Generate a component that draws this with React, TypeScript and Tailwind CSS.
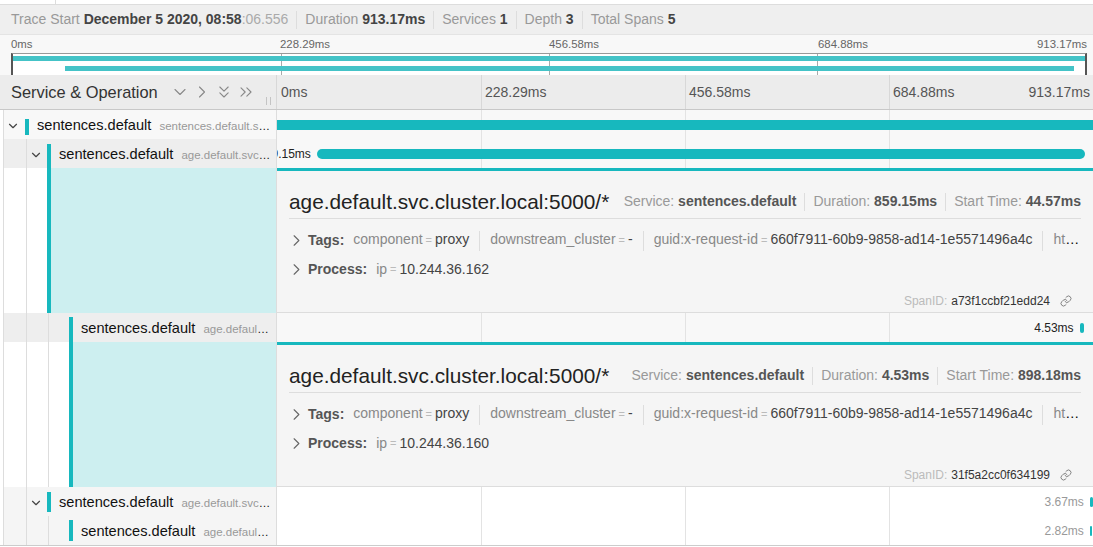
import { ChevronDown, ChevronRight, ChevronsDown, ChevronsRight, Link } from 'lucide-react';

const TOTAL = 913.17;

type Detail = {
  service: string;
  duration: string;
  start: string;
  ip: string;
  spanId: string;
};

type Span = {
  depth: number;
  op: string;
  start: number;
  duration: number;
  label?: string;
  labelClass?: string;
  hasChildren?: boolean;
  nameBg: string;
  viewBg: string;
  markerClass: string;
  barClass: string;
  detail?: Detail;
};

const OP = 'age.default.svc.cluster.local:5000/*';

const spans: Span[] = [
  {
    depth: 0,
    op: 'sentences.default.svc.cluster.local:5000/*',
    start: 0,
    duration: TOTAL,
    hasChildren: true,
    nameBg: 'bg-[#f8f8f8]',
    viewBg: 'bg-[#f8f8f8]',
    markerClass: 'mt-[9px] mb-[4px]',
    barClass: 'rounded-none',
  },
  {
    depth: 1,
    op: OP,
    start: 44.57,
    duration: 859.15,
    label: '859.15ms',
    labelClass: 'text-[#222]',
    hasChildren: true,
    nameBg: 'bg-[#eeeeee]',
    viewBg: 'bg-[#f8f8f8]',
    markerClass: 'mt-[5px]',
    barClass: 'rounded-[5px]',
    detail: {
      service: 'sentences.default',
      duration: '859.15ms',
      start: '44.57ms',
      ip: '10.244.36.162',
      spanId: 'a73f1ccbf21edd24',
    },
  },
  {
    depth: 2,
    op: OP,
    start: 898.18,
    duration: 4.53,
    label: '4.53ms',
    labelClass: 'text-[#222]',
    nameBg: 'bg-[#eeeeee]',
    viewBg: 'bg-[#f8f8f8]',
    markerClass: 'mt-[4px]',
    barClass: 'rounded-[3px]',
    detail: {
      service: 'sentences.default',
      duration: '4.53ms',
      start: '898.18ms',
      ip: '10.244.36.160',
      spanId: '31f5a2cc0f634199',
    },
  },
  {
    depth: 1,
    op: OP,
    start: 909.6,
    duration: 3.67,
    label: '3.67ms',
    labelClass: 'text-[#999]',
    hasChildren: true,
    nameBg: 'bg-[#f5f5f5]',
    viewBg: 'bg-white',
    markerClass: 'mt-[5px] mb-[4px]',
    barClass: 'rounded-[2px]',
  },
  {
    depth: 2,
    op: OP,
    start: 909.6,
    duration: 2.82,
    label: '2.82ms',
    labelClass: 'text-[#999]',
    nameBg: 'bg-[#f5f5f5]',
    viewBg: 'bg-white',
    markerClass: 'my-[4px]',
    barClass: 'rounded-[2px]',
  },
];

const tags: [string, string][] = [
  ['component', 'proxy'],
  ['downstream_cluster', '-'],
  ['guid:x-request-id', '660f7911-60b9-9858-ad14-1e5571496a4c'],
  ['http.method', 'GET'],
];

function Sep() {
  return <span className="mx-2 inline-block h-[18px] w-px bg-[#dddddd] align-middle" />;
}

function Guides({ depth }: { depth: number }) {
  return (
    <>
      {Array.from({ length: depth }).map((_, i) => (
        <div
          key={i}
          className={`${i === 0 ? 'w-[23px]' : 'w-[22px]'} shrink-0 border-r border-[#dddddd]`}
        />
      ))}
    </>
  );
}

function Ticks({ line }: { line: string }) {
  return (
    <div className="grid h-full grid-cols-4">
      <div />
      <div className={`border-l ${line}`} />
      <div className={`border-l ${line}`} />
      <div className={`border-l ${line}`} />
    </div>
  );
}

function SpanRow({ span }: { span: Span }) {
  const left = (span.start / TOTAL) * 100;
  const width = (span.duration / TOTAL) * 100;
  return (
    <div className="flex h-[29px]">
      <div className="flex w-[277px] shrink-0 border-r border-[#dddddd]">
        <div className="w-[4px] shrink-0 border-r border-[#dddddd] bg-white" />
        <div className={`flex min-w-0 flex-1 ${span.nameBg}`}>
          <Guides depth={span.depth} />
          <div className={`${span.depth === 0 ? 'w-[21px]' : 'w-[20px]'} flex shrink-0 items-center pt-[3px]`}>
            {span.hasChildren && (
              <ChevronDown size={14} strokeWidth={2} className="ml-[2px] text-[#444]" />
            )}
          </div>
          <div className={`w-[4px] shrink-0 bg-[#17b8be] ${span.markerClass}`} />
          <div className="min-w-0 flex-1 self-center truncate pl-[8px] pr-[5px] pt-[3px] text-[11.5px] text-[#111]">
            <span className="text-[14.6px]">sentences.default</span>
            <span className="ml-[8px] text-[#999]">{span.op}</span>
          </div>
        </div>
      </div>
      <div className={`relative min-w-0 flex-1 overflow-hidden ${span.viewBg}`}>
        <Ticks line="border-[#e3e3e3]" />
        <div
          className={`absolute top-1/2 h-[10px] -translate-y-1/2 bg-[#17b8be] ${span.barClass}`}
          style={{ left: `${left}%`, width: `${width}%` }}
        />
        {span.label && (
          <span
            className={`absolute top-1/2 -translate-y-1/2 whitespace-nowrap text-[12px] ${span.labelClass}`}
            style={{ right: `calc(${100 - left}% + 6px)` }}
          >
            {span.label}
          </span>
        )}
      </div>
    </div>
  );
}

function DetailRow({ depth, d }: { depth: number; d: Detail }) {
  return (
    <div className="flex h-[145px]">
      <div className="flex w-[277px] shrink-0 border-r border-[#dddddd]">
        <div className="w-[4px] shrink-0 border-r border-[#dddddd] bg-white" />
        <Guides depth={depth} />
        <div className={`${depth === 0 ? 'w-[21px]' : 'w-[20px]'} shrink-0 bg-white`} />
        <div className="w-[4px] shrink-0 bg-[#17b8be]" />
        <div className="flex-1 bg-[#cdeff0]" />
      </div>
      <div className="flex min-w-0 flex-1 flex-col border-t-[3px] border-b border-t-[#17b8be] border-b-[#dddddd] bg-[#f5f5f5] px-[12px]">
        <div className="flex items-center justify-between border-b border-[#dddddd] pt-[18px] pb-[4px]">
          <span className="text-[20.8px] leading-[25px] text-[#222]">{OP}</span>
          <div className="flex items-center whitespace-nowrap text-[14px] text-[#999]">
            <span>
              Service: <b className="text-[#555]">{d.service}</b>
            </span>
            <Sep />
            <span>
              Duration: <b className="text-[#555]">{d.duration}</b>
            </span>
            <Sep />
            <span>
              Start Time: <b className="text-[#555]">{d.start}</b>
            </span>
          </div>
        </div>
        <div className="mt-[10px] flex h-[22px] items-center text-[14px]">
          <ChevronRight size={19} strokeWidth={1.4} className="-ml-[2px] shrink-0 text-[#666]" />
          <b className="ml-[2px] shrink-0 text-[#555]">Tags:</b>
          <div className="ml-[9px] min-w-0 flex-1 truncate">
            {tags.map(([k, v], i) => (
              <span key={k}>
                {i > 0 && <span className="mx-[10px] inline-block h-[20px] w-px bg-[#dddddd] align-middle" />}
                <span className="text-[#888]">{k}</span>
                <span className="mx-[3px] text-[11px] text-[#bbb]">=</span>
                <span className="text-[#444]">{v}</span>
              </span>
            ))}
          </div>
        </div>
        <div className="mt-[7px] flex h-[22px] items-center text-[14px]">
          <ChevronRight size={19} strokeWidth={1.4} className="-ml-[2px] shrink-0 text-[#666]" />
          <b className="ml-[2px] text-[#555]">Process:</b>
          <span className="ml-[9px] text-[#888]">ip</span>
          <span className="mx-[3px] text-[11px] text-[#bbb]">=</span>
          <span className="text-[#444]">{d.ip}</span>
        </div>
        <div className="mt-[13px] flex items-center justify-end pr-[9px] text-[12px] leading-[16px]">
          <span className="text-[#bbb]">SpanID:</span>
          <span className="ml-[4px] text-[#333]">{d.spanId}</span>
          <Link size={12} strokeWidth={1.8} className="ml-[10px] text-[#777]" />
        </div>
      </div>
    </div>
  );
}

export default function App() {
  return (
    <div className="flex h-[547px] w-[1093px] flex-col overflow-hidden bg-white font-['Liberation_Sans',Arial,sans-serif]">
      <div className="h-[5px] shrink-0 border-b border-[#dddddd] bg-white">
        <div className="h-full w-[56px] border-r border-[#dddddd]" />
      </div>

      <div className="flex h-[30px] shrink-0 items-center border-b border-[#e4e4e4] bg-[#efefef] px-[11px] text-[14px] text-[#999]">
        <span>
          Trace Start <b className="text-[#444]">December 5 2020, 08:58</b>
          <span className="text-[#aaa]">:06.556</span>
        </span>
        <Sep />
        <span>
          Duration <b className="text-[#444]">913.17ms</b>
        </span>
        <Sep />
        <span>
          Services <b className="text-[#444]">1</b>
        </span>
        <Sep />
        <span>
          Depth <b className="text-[#444]">3</b>
        </span>
        <Sep />
        <span>
          Total Spans <b className="text-[#444]">5</b>
        </span>
      </div>

      <div className="h-[40px] shrink-0 bg-[#f8f8f8] pl-[11px] pr-[6px] pt-[2px]">
        <div className="grid grid-cols-4 text-[11.4px] leading-[14px] text-[#666]">
          <span>0ms</span>
          <span>228.29ms</span>
          <span>456.58ms</span>
          <div className="flex justify-between">
            <span>684.88ms</span>
            <span>913.17ms</span>
          </div>
        </div>
        <div className="relative mt-[2px] h-[22px] border-x-2 border-t border-x-[#555] border-t-[#999] bg-white">
          <Ticks line="border-[#aaaaaa]" />
          <div className="absolute left-0 top-[2px] h-[5px] w-full bg-[#44c3c7]" />
          <div className="absolute top-[12px] h-[5px] bg-[#44c3c7]" style={{ left: '4.88%', width: '94.08%' }} />
        </div>
      </div>

      <div className="flex h-[35px] shrink-0 border-b border-[#c8c8c8] bg-[#ececec]">
        <div className="flex w-[277px] shrink-0 items-center border-r border-[#d8d8d8] pl-[11px]">
          <span className="text-[16.4px] text-[#333]">Service &amp; Operation</span>
          <div className="ml-[12px] flex items-center gap-[2px] text-[#888]">
            <ChevronDown size={20} strokeWidth={1.3} />
            <ChevronRight size={20} strokeWidth={1.3} />
            <ChevronsDown size={20} strokeWidth={1.3} />
            <ChevronsRight size={20} strokeWidth={1.3} />
          </div>
          <div className="mb-[4px] ml-auto mr-[5px] flex gap-[3px] self-end">
            <div className="h-[8px] w-px bg-[#c4c4c4]" />
            <div className="h-[8px] w-px bg-[#c4c4c4]" />
          </div>
        </div>
        <div className="grid flex-1 grid-cols-4 text-[14px] text-[#555]">
          <div className="flex items-center pl-[4px]">0ms</div>
          <div className="flex items-center border-l border-[#d8d8d8] pl-[3px]">228.29ms</div>
          <div className="flex items-center border-l border-[#d8d8d8] pl-[3px]">456.58ms</div>
          <div className="flex items-center justify-between border-l border-[#d8d8d8] pl-[3px] pr-[3px]">
            <span>684.88ms</span>
            <span>913.17ms</span>
          </div>
        </div>
      </div>

      <div className="shrink-0 border-b border-[#cccccc]">
        {spans.map((s, i) => (
          <div key={i}>
            <SpanRow span={s} />
            {s.detail && <DetailRow depth={s.depth} d={s.detail} />}
          </div>
        ))}
      </div>
    </div>
  );
}
